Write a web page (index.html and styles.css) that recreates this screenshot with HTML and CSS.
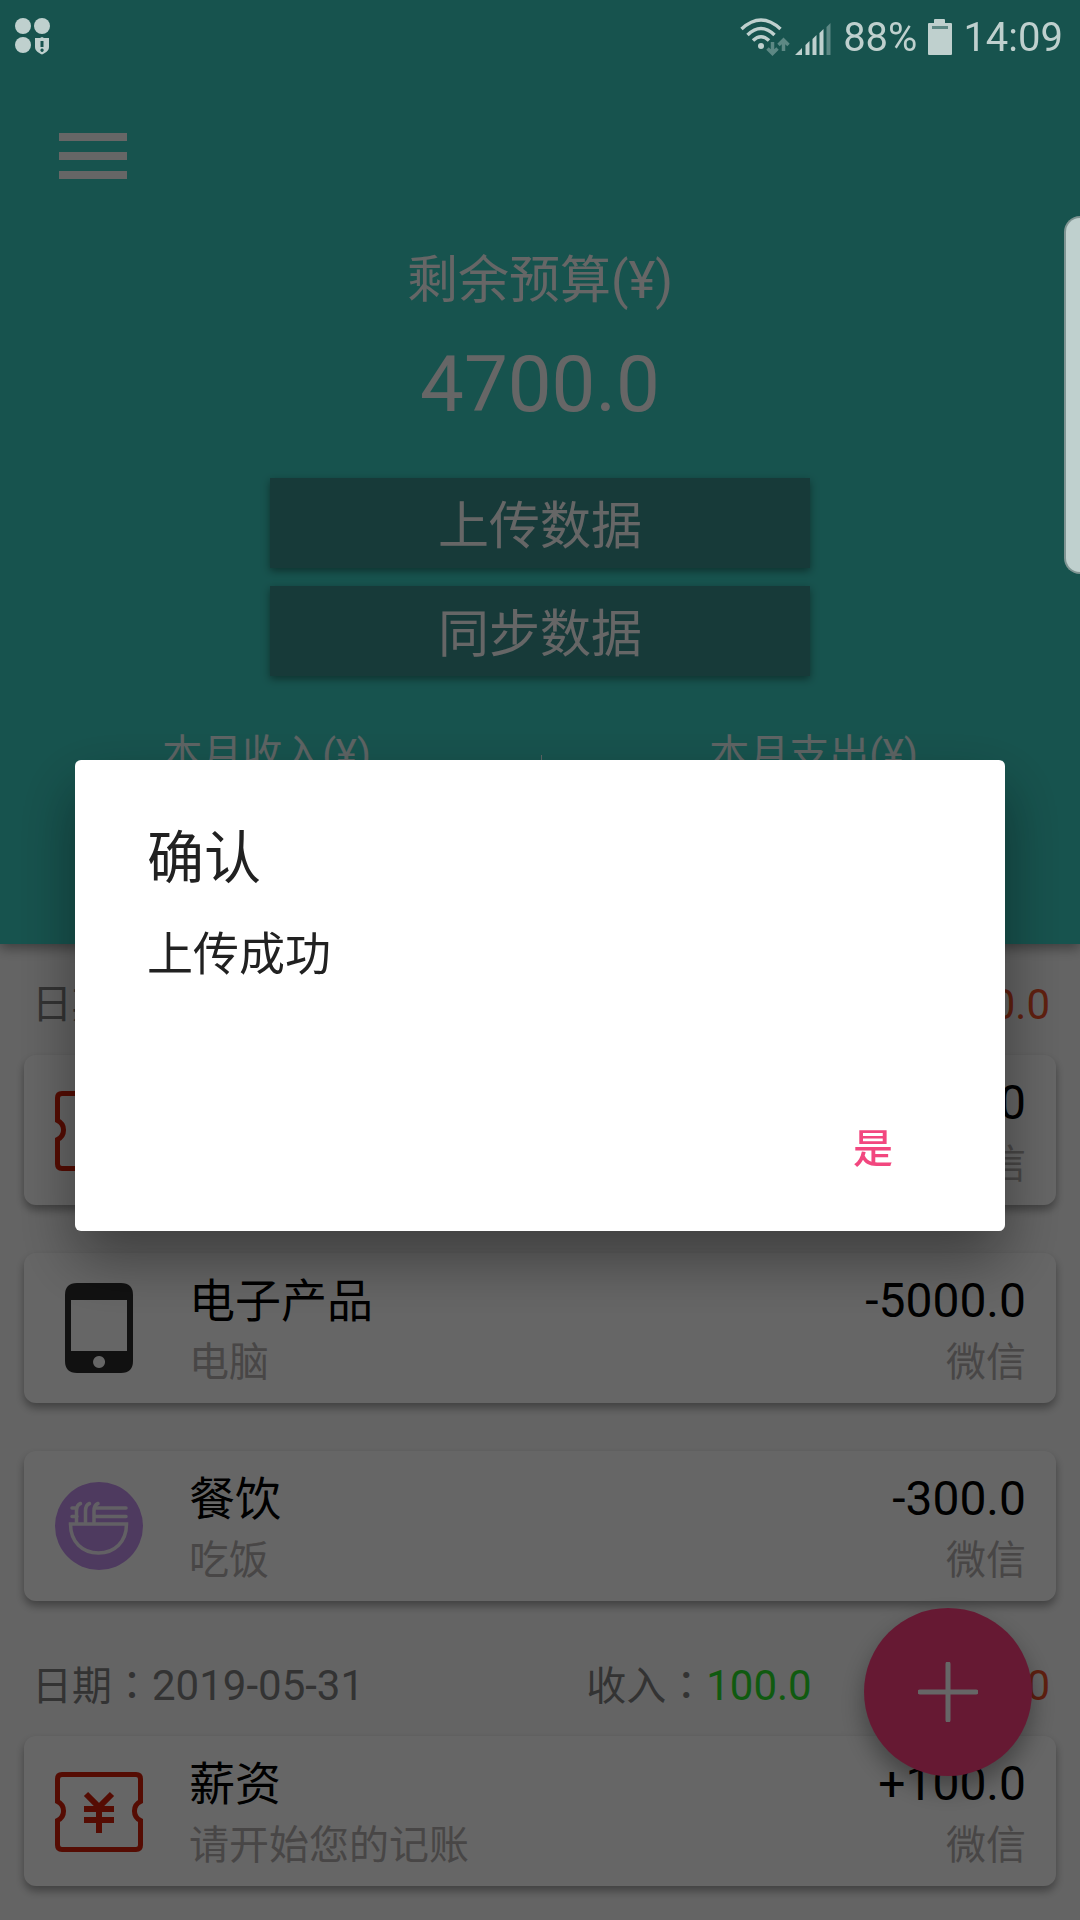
FILE: index.html
```html
<!DOCTYPE html>
<html lang="zh-CN">
<head>
<meta charset="utf-8">
<meta name="viewport" content="width=device-width, initial-scale=1">
<title>记账</title>
<link rel="stylesheet" href="styles.css">
</head>
<body>
<div class="status-bar">
  <svg class="status-apps" width="36" height="38" viewBox="0 0 36 38" aria-hidden="true">
    <circle cx="8" cy="8" r="8"/><circle cx="27" cy="8" r="8"/><circle cx="8" cy="27" r="8"/>
    <path fill-rule="evenodd" d="M27 19l2 1h5v9c0 4-4 6-7 7.500c-3-1.500-7-3.500-7-7.500v-9h5zM25.500 23v6h3v-6zM27 30.500a1.700 1.700 0 1 0 .1 0z"/>
  </svg>
  <div class="status-right">
    <svg class="status-network" width="92" height="40" viewBox="0 0 92 40" aria-hidden="true">
      <g fill="none" stroke="#bfd0ce" stroke-width="3.500">
        <path d="M1.500 12Q21 -6 40.500 12"/><path d="M7.500 18Q21 5 34.500 18"/><path d="M13 23.500Q21 16 29 23.500"/>
      </g>
      <circle cx="21" cy="29" r="3"/>
      <g fill="none" stroke="#5d8884" stroke-width="3.500"><path d="M32.500 25v11M27.500 31.500l5 5l5-5M43.500 34V23M38.500 28l5-5l5 5"/></g>
      <path d="M55 38h7v-7zM65.500 38h4V24l-4 4zM72.500 38h4V18l-4 4zM79.500 38h4V12l-4 4z"/>
      <path fill="#5d8884" d="M86.500 38h4V6l-4 4z"/>
    </svg>
    <span class="status-battery-text">88%</span>
    <svg class="status-battery" width="24" height="36" viewBox="0 0 24 36" aria-hidden="true">
      <path d="M1 4h5V1q0-1 1-1h9q1 0 1 1v3h6q1 0 1 1v30q0 1-1 1H1q-1 0-1-1V5q0-1 1-1z"/>
      <path fill="#5d8884" d="M4 7h16v3H4z"/>
    </svg>
    <time class="status-time">14:09</time>
  </div>
</div>

<div class="app">
  <header class="summary">
    <button class="menu" type="button" aria-label="菜单"><span></span><span></span><span></span></button>
    <p class="budget-label">剩余预算(¥)</p>
    <p class="budget-value">4700.0</p>
    <div class="actions">
      <button class="action" type="button">上传数据</button>
      <button class="action" type="button">同步数据</button>
    </div>
    <div class="totals">
      <p class="total">本月收入(¥)</p>
      <p class="total">本月支出(¥)</p>
    </div>
  </header>

  <main class="records">
    <section class="day">
      <div class="day-head">
        <h2 class="day-date">日期<span lang="zh-TW">：</span></h2>
        <p>支出<span lang="zh-TW">：</span><b class="expense">5300.0</b></p>
      </div>
      <article class="card">
        <svg class="icon" viewBox="0 0 90 90" aria-hidden="true"><use href="#ticket"/></svg>
        <div class="card-main"><h3>薪资</h3><p>记账</p></div>
        <div class="card-side"><strong>+100.0</strong><p>微信</p></div>
      </article>
      <article class="card">
        <svg class="icon" viewBox="0 0 90 90" aria-hidden="true">
          <path fill="#2c2c2c" fill-rule="evenodd" d="M23 0h44q12 0 12 12v66q0 12-12 12H23q-12 0-12-12V12Q11 0 23 0zM17 17v51h56V17zM45 73a6 6 0 1 0 .1 0z"/>
        </svg>
        <div class="card-main"><h3>电子产品</h3><p>电脑</p></div>
        <div class="card-side"><strong>-5000.0</strong><p>微信</p></div>
      </article>
      <article class="card">
        <svg class="icon" viewBox="0 0 90 90" aria-hidden="true">
          <circle cx="45" cy="45" r="44" fill="#c491ee"/>
          <g fill="none" stroke="#f5f0fa" stroke-width="3.500" stroke-linecap="round">
            <path d="M16.500 43h56c0 18-12 29-28 29S16.500 61 16.500 43z"/>
            <path d="M18 27h5M18 35.500h5M42 27h30M42 35.500h30M22.500 41V30q0-6 4-7.500M31.500 41V30q0-6 4-7.500M40 41V30q0-6 4-7.500"/>
          </g>
        </svg>
        <div class="card-main"><h3>餐饮</h3><p>吃饭</p></div>
        <div class="card-side"><strong>-300.0</strong><p>微信</p></div>
      </article>
    </section>
    <section class="day">
      <div class="day-head">
        <h2 class="day-date">日期<span lang="zh-TW">：</span><b>2019-05-31</b></h2>
        <p>收入<span lang="zh-TW">：</span><b class="income">100.0</b></p>
        <p>支出<span lang="zh-TW">：</span><b class="expense">0.0</b></p>
      </div>
      <article class="card">
        <svg class="icon" viewBox="0 0 90 90" aria-hidden="true">
          <g id="ticket" fill="none" stroke="#d41f08" stroke-width="5">
            <path d="M8 8.500h74q4.500 0 4.500 4.500v22.500a10.500 10.500 0 0 0 0 19V79q0 4.500-4.500 4.500H8q-4.500 0-4.500-4.500V54.500a10.500 10.500 0 0 0 0-19V13q0-4.500 4.500-4.500z"/>
            <path stroke-width="6" d="M32 28l13 13l13-13M45 41v26M30 43h30M30 54h30"/>
          </g>
        </svg>
        <div class="card-main"><h3>薪资</h3><p>请开始您的记账</p></div>
        <div class="card-side"><strong>+100.0</strong><p>微信</p></div>
      </article>
    </section>
  </main>

  <button class="fab" type="button" aria-label="添加">
    <svg width="60" height="60" viewBox="0 0 60 60" aria-hidden="true"><path d="M30 2v56M2 30h56" fill="none" stroke="#fff" stroke-width="5" stroke-linecap="round"/></svg>
  </button>
</div>

<div class="backdrop">
  <div class="dialog" role="alertdialog" aria-labelledby="dialog-title" aria-describedby="dialog-text">
    <h1 id="dialog-title">确认</h1>
    <p id="dialog-text">上传成功</p>
    <div class="dialog-actions"><button type="button">是</button></div>
  </div>
</div>
<div class="edge-handle"></div>
</body>
</html>
```
FILE: styles.css
```css
* { box-sizing: border-box; }

body, h1, h2, h3, p { margin: 0; font-weight: 400; }

body {
  min-height: 100vh;
  overflow: hidden;
  background: #fafafa;
  color: #000;
  font-family: Roboto, "Noto Sans CJK SC", sans-serif;
  font-size: 40px;
}

button {
  border: 0;
  padding: 0;
  background: none;
  color: inherit;
  font: inherit;
  cursor: pointer;
}

b, strong { font-weight: 400; }

/* status bar */
.status-bar {
  position: fixed;
  inset: 0 0 auto;
  z-index: 3;
  display: flex;
  align-items: center;
  justify-content: space-between;
  height: 74px;
  padding: 0 17px 0 15px;
  color: #bfd0ce;
  fill: currentColor;
}

.status-right { display: flex; align-items: center; gap: 11px; }
.status-right span, .status-right time { padding-top: 2px; line-height: 72px; }

/* header */
.summary {
  display: flex;
  flex-direction: column;
  align-items: center;
  padding-top: 132px;
  background: #3bcfc3;
  color: #fff;
  box-shadow: 0 4px 12px rgba(0, 0, 0, .4);
}

.menu {
  align-self: flex-start;
  display: flex;
  flex-direction: column;
  gap: 11px;
  width: 68px;
  margin-left: 59px;
  padding: 1px 0;
}

.menu span { height: 8px; background: #fff; }

.budget-label { margin-top: 65px; font-size: 51px; line-height: 72px; }
.budget-value { margin-top: 20px; font-size: 78px; line-height: 96px; }

.actions {
  display: flex;
  flex-direction: column;
  gap: 18px;
  width: 50%;
  margin-top: 45px;
}

.action {
  height: 90px;
  padding-top: 8px;
  background: #3a9190;
  font-size: 51px;
  line-height: 82px;
  box-shadow: 0 3px 8px rgba(0, 0, 0, .4);
}

.totals { display: flex; width: 100%; margin-top: 49px; }

.total {
  flex: 1;
  padding: 0 8px 159px 0;
  line-height: 60px;
  text-align: center;
  opacity: .9;
}

.total + .total { position: relative; padding: 0 0 0 6px; }

.total + .total::before {
  content: "";
  position: absolute;
  top: 30px;
  left: 0;
  width: 1px;
  height: 108px;
  background: #fff;
}

/* records */
.records { padding: 24px 24px 0; }

.day-head {
  display: flex;
  gap: 60px;
  height: 72px;
  margin-bottom: 15px;
  padding: 0 6px 0 8px;
  color: #808080;
  line-height: 73px;
}

.day-head h2 { flex: 1; font-size: 40px; }
.day-head b { font-size: 42px; }
.day-head span { font-family: "Noto Sans CJK TC", sans-serif; line-height: 1; }
.income { color: #28e128; }
.expense { color: #ee5028; }

.card {
  display: flex;
  align-items: center;
  height: 150px;
  margin-bottom: 48px;
  padding: 0 30px;
  border-radius: 12px;
  background: #fff;
  box-shadow: 0 5px 8px rgba(0, 0, 0, .35);
}

.icon { flex: none; width: 90px; height: 90px; }
.card-main, .card-side { padding-top: 6px; }
.card-main { flex: 1; margin-left: 45px; }
.card-main h3 { font-size: 46px; line-height: 64px; }
.card-side { text-align: right; }
.card-side strong { display: block; font-size: 48px; line-height: 64px; }
.card p { color: #b4b0ae; line-height: 60px; }

.fab {
  position: fixed;
  right: 48px;
  bottom: 144px;
  display: flex;
  align-items: center;
  justify-content: center;
  width: 168px;
  height: 168px;
  border-radius: 50%;
  background: #ff4081;
  box-shadow: 0 12px 24px rgba(0, 0, 0, .35);
}

/* dialog */
.backdrop {
  position: fixed;
  inset: 0;
  z-index: 2;
  display: flex;
  align-items: center;
  justify-content: center;
  padding: 71px 75px 0;
  background: rgba(0, 0, 0, .6);
}

.dialog {
  width: 100%;
  padding: 57px 72px 31px;
  border-radius: 6px;
  background: #fff;
  color: #212121;
  box-shadow: 0 28px 60px rgba(0, 0, 0, .4);
}

.dialog h1 { font-size: 57px; line-height: 84px; }
.dialog p { margin-top: 19px; font-size: 46px; line-height: 68px; }
.dialog-actions { display: flex; justify-content: flex-end; margin-top: 104px; }

.dialog-actions button {
  width: 120px;
  height: 108px;
  color: #f2477f;
  font-weight: 500;
}

.edge-handle {
  position: fixed;
  top: 216px;
  right: 0;
  z-index: 3;
  width: 16px;
  height: 358px;
  border: 2px solid #7f9492;
  border-right: 0;
  border-radius: 16px 0 0 16px;
  background: #bfd0ce;
}
```
